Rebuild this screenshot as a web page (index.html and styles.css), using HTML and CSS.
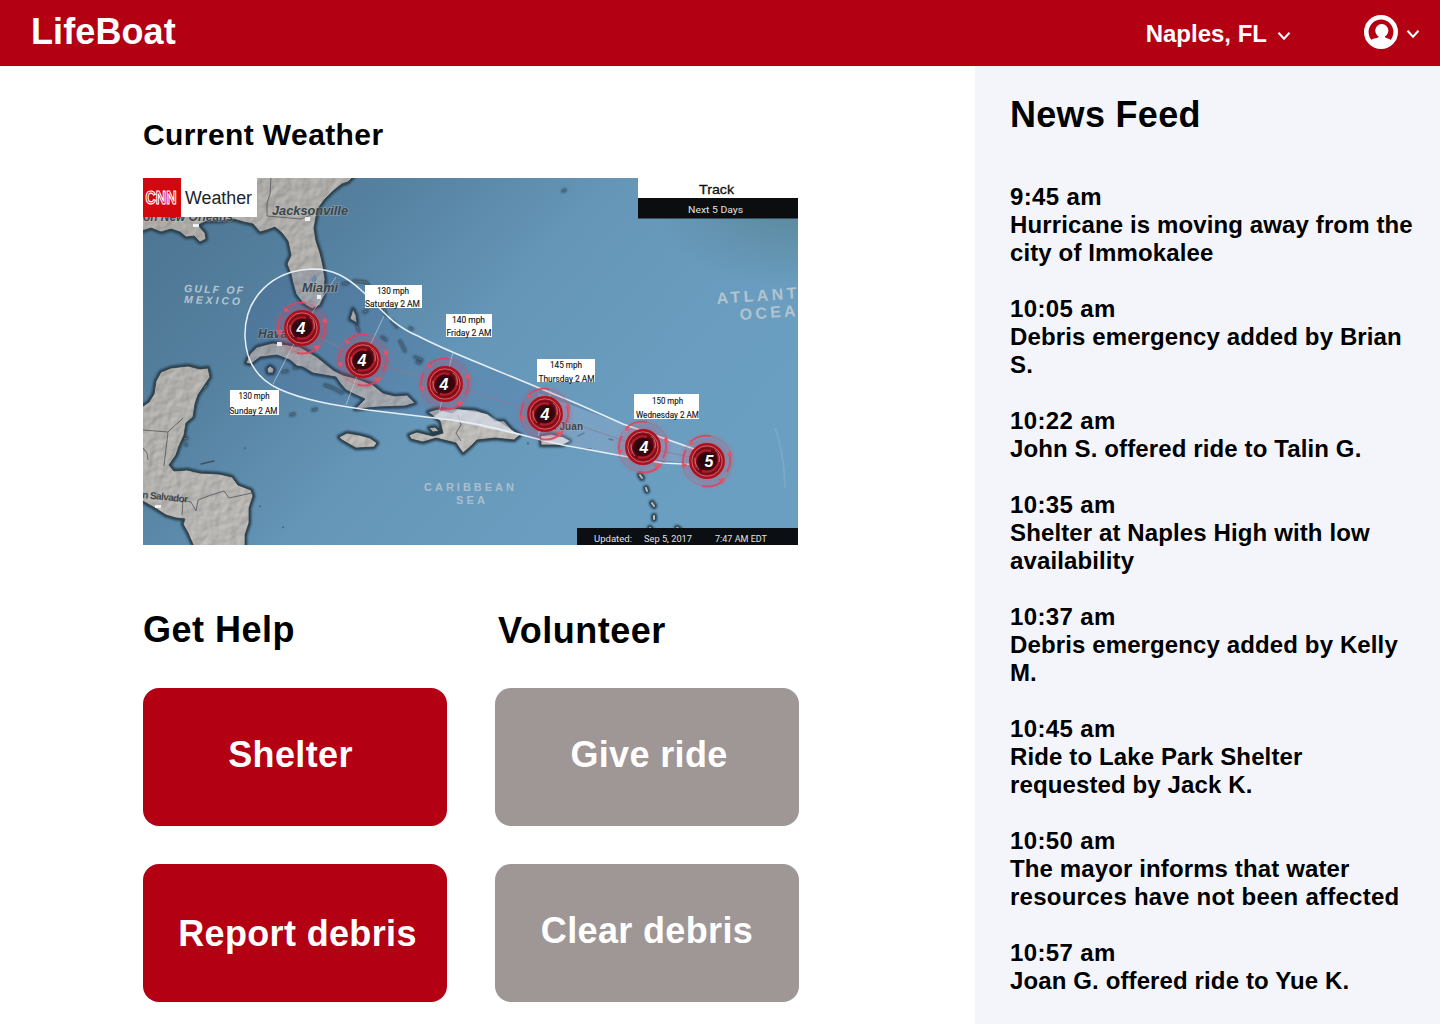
FILE: index.html
```html
<!DOCTYPE html>
<html lang="en">
<head>
<meta charset="utf-8">
<title>LifeBoat</title>
<link rel="stylesheet" href="styles.css">
</head>
<body>
<header class="topbar">
  <h1 class="brand">LifeBoat</h1>
  <div class="location">
    <span>Naples, FL</span>
    <svg class="chevron" width="14" height="10" viewBox="0 0 14 10"><path d="M1.5 1.8 7 7.6 12.5 1.8"/></svg>
  </div>
  <div class="account">
    <svg width="34" height="34" viewBox="0 0 34 34"><circle cx="17" cy="17" r="14.7" fill="none" stroke="#fff" stroke-width="4.6"/><circle cx="17.8" cy="15.6" r="6.6" fill="#fff"/><path d="M14.6 19h6.4v3.200c1.500 1.200 4.500 1.200 6 3.300L23 31H11l-4.300-5.500c1.500-2.100 5.900-2.300 7.900-3.300z" fill="#fff"/></svg>
    <svg class="chevron" width="14" height="10" viewBox="0 0 14 10"><path d="M1.5 1.8 7 7.6 12.5 1.8"/></svg>
  </div>
</header>
<div class="layout">
  <main class="main">
    <h2 class="weather-title">Current Weather</h2>
    <svg class="map" width="655" height="367" viewBox="0 0 655 367">
      <defs>
        <linearGradient id="sea" x1="0" y1="0" x2="1" y2="0.5"><stop offset="0" stop-color="#4b7490"/><stop offset="0.28" stop-color="#547f9e"/><stop offset="0.6" stop-color="#6697b9"/><stop offset="1" stop-color="#6b9fc1"/></linearGradient>
        <radialGradient id="dusk" cx="1" cy="0.08" r="0.22"><stop offset="0" stop-color="#55808f" stop-opacity=".7"/><stop offset="1" stop-color="#55808f" stop-opacity="0"/></radialGradient>
        <radialGradient id="core"><stop offset="0" stop-color="#16060a"/><stop offset="0.55" stop-color="#3c060e"/><stop offset="0.85" stop-color="#8a0f1b"/><stop offset="1" stop-color="#b6192a"/></radialGradient>
        <radialGradient id="glow"><stop offset="0.5" stop-color="#d8405a" stop-opacity=".35"/><stop offset="1" stop-color="#d8405a" stop-opacity="0"/></radialGradient>
        <linearGradient id="terrain" x1="0" y1="0" x2="1" y2="1"><stop offset="0" stop-color="#aaa9a5"/><stop offset="1" stop-color="#c2c1bd"/></linearGradient>
        <filter id="relief" x="-5%" y="-5%" width="110%" height="110%" color-interpolation-filters="sRGB"><feTurbulence type="fractalNoise" baseFrequency="0.11" numOctaves="2" seed="4" result="n"/><feDiffuseLighting in="n" surfaceScale="0.8" lighting-color="#fff" result="l"><feDistantLight azimuth="225" elevation="62"/></feDiffuseLighting><feComposite in="l" in2="SourceGraphic" operator="arithmetic" k1="1.12" k2="0" k3="0" k4="0" result="m"/><feComposite in="m" in2="SourceGraphic" operator="in"/></filter>
        <filter id="soft"><feGaussianBlur stdDeviation="1"/></filter>
        <clipPath id="frame"><rect width="655" height="367"/></clipPath>
        <path id="coast" d="M-4-4H213L205 4 199 6 190 13 182 21 176 29 173 39 171 50 173 63 177 75 180 88 182 101 181 117 177 127 169 131 160 125 153 116 150 105 148 96 144 86 148 77 145 63 139 55 132 49 124 52 117 54 110 46 101 44 90 41 77 43 64 43 55 47 62 55 63 61 57 64 51 58 43 59 37 54 28 51 18 54 8 50-4 54zM-4 231 6 224 11 216 13 203 18 194 28 190 45 188 57 191 65 190 67 199 61 208 55 217 52 226 50 239 43 245 41 257 36 268 33 277 26 287 31 293 44 292 57 295 76 296 89 299 95 307 108 312 110 318 106 330 106 345 102 357V371H52L45 355 40 346 42 341 33 340 23 337 12 330-4 321zM103 185 107 176 114 169 130 165 145 167 157 169 174 179 190 192 200 197 215 201 230 207 240 215 252 218 264 217 272 225 262 228 235 229 212 231 222 221 213 217 203 212 197 205 193 199 170 195 160 189 154 188 147 182 134 177 117 179 108 186zM285 234 295 231 309 235 315 231 332 232 344 236 352 243 361 243 369 252 377 257 371 262 352 260 334 262 327 269 320 275 313 265 293 260 280 264 268 261 266 257 274 254 290 258 300 255 297 243zM196 259 204 255 216 257 227 260 234 265 231 269 213 270 199 262zM398 258 408 256 420 259 427 263 419 267 398 267zM286 250 292 249 296 253 290 254zM124 191 127 188 131 191 130 195 125 195zM207 141 210 131 213 137 214 145z"/>
        <path id="islets" d="M200 106 205 105M211 103 223 104 226 108M214 148 216 153M221 134 224 133M241 131 243 137M249 143 254 149M267 150 269 151M239 159 243 162M257 163 262 173M272 179 279 182M277 185 274 184M182 207 190 210 199 215M140 194 144 193M151 190 154 190M61 210 64 207M41 261 44 260M43 266 43 267M148 237 151 236M170 232 173 231M420 13 422 12"/>
        <path id="antilles" d="M497 297 499 300M503 310 504 313M509 325 511 328M511 338 511 341M507 350 508 351M534 350 536 351"/>
        <path id="specks" d="M58 286 71 283M117 328 117 328.500M102 270 102 270.500M140 349 140 349.500M385 265 385 266M435 258 441 255M440 271 448 271M466 261 470 262"/>
        <g id="storm"><circle r="30" fill="url(#glow)"/><g fill="none" stroke="#e04259"><circle r="25" stroke-opacity=".4" stroke-width=".9"/><path d="M-17-19A25 25 0 0 1 4-25" stroke-width="1.500"/><path d="M-23 7A24 24 0 0 1-21-11M22-8A24 24 0 0 1 20 11M17 19A25 25 0 0 1-5 25" stroke-width="1.800" stroke-opacity=".85"/></g><path d="M-18-21l1 5-1 0 6-1zM-25 2l5 1-3 5zM20-6l3-5 3 6zM11 18l8-1-4 6z" fill="#e65266"/><circle r="16.300" fill="url(#core)" stroke="#b00f1c" stroke-width="3.200"/><circle r="15.200" fill="none" stroke="#dcb0ae" stroke-opacity=".7" stroke-width=".8"/><path d="M-11 7C-15-3-7-13 4-10M11-7C15 4 6 13-5 10" fill="none" stroke="#b01c2a" stroke-width="2.400"/><path d="M8-11C12-8 13-4 12 1M-12-3C-12 2-11 5-8 9" fill="none" stroke="#dd8d90" stroke-opacity=".7" stroke-width="1"/></g>
      </defs>
      <g clip-path="url(#frame)">
        <rect width="655" height="367" fill="url(#sea)"/>
        <rect width="655" height="367" fill="url(#dusk)"/>
        <path d="M632 250C638 265 641 285 642 310" fill="none" stroke="#a5c5da" stroke-opacity=".25" stroke-width="2"/>
        <g filter="url(#soft)" fill="none" stroke="#263d4c" stroke-linejoin="round" stroke-linecap="round"><use href="#coast" stroke-width="4.5"/><use href="#islets" stroke-width="3.5" stroke-opacity=".8"/><use href="#antilles" stroke-width="6"/></g>
        <use href="#coast" fill="url(#terrain)" filter="url(#relief)"/>
        <use href="#coast" fill="none" stroke="#39444a" stroke-width=".8"/>
        <use href="#islets" fill="none" stroke="#65767e" stroke-width="1"/>
        <use href="#antilles" fill="none" stroke="#b9c0c0" stroke-width="2" stroke-linecap="round"/>
        <use href="#specks" fill="none" stroke="#3a5463" stroke-width="1.300" stroke-linecap="round"/>
        <path d="M128 0 127 16 124 25V38L158 41 170 36M0 252 25 254 29 250 36 244 40 240M25 254 21 288M39 337 40 322 48 324 53 333 55 322 68 317 81 313 86 320 109 315M315 237 318 247 313 255 318 263M0 270 4 275 5 282" fill="none" stroke="#50565a" stroke-width=".8"/>
        <path d="M168 101 172 96 174 101 171 106z" fill="#7199b7"/>
        <path d="M170 91C190 91 204 99 219 113 235 127 248 147 275 158 302 172 324 180 350 191L435 226 480 246 560 274 562 287 520 285 480 278 420 267C380 258 340 245 300 241L225 232C190 227 160 222 136 211 114 201 103 183 102 159 101 119 130 92 170 91z" fill="#31508a" fill-opacity=".16"/>
        <path d="M300 232 315 231 344 236 369 252 376 257 320 245 290 239zM398 258 420 259 427 263 419 267 398 263z" fill="#e8edf6" fill-opacity=".6"/>
        <path d="M395 215 480 246 560 274 562 287 480 278 395 261z" fill="#c4d6ee" fill-opacity=".25"/>
        <path d="M560 274 480 246 435 226 350 191C324 180 302 172 275 158 248 147 235 127 219 113 204 99 190 91 170 91 130 92 101 119 102 159 103 183 114 201 136 211 160 222 190 227 225 232L300 241C340 245 380 258 420 267L480 278 520 285 562 287" fill="none" stroke="#e6f0f6" stroke-width="1.5"/>
        <path d="M193 99 159 150 130 206M241 138 220 182 203 227M310 174 302 206 296 236M408 213 402 236 395 258" fill="none" stroke="#c9d3dc" stroke-opacity=".65" stroke-width="1"/>
        <path d="M159 150 220 182 302 206 402 236 500 269 565 283" fill="none" stroke="#98758e" stroke-opacity=".7" stroke-width="1"/>
        <path d="M162 39h5v4h-5zM174 117h4v4h-4zM134 164h5v4h-5zM50 46h6v3h-6zM12 327h6v3h-6z" fill="#eef2f4"/>
        <g class="place"><text x="129" y="37" textLength="76" lengthAdjust="spacingAndGlyphs">Jacksonville</text><text x="159" y="114" textLength="36" lengthAdjust="spacingAndGlyphs">Miami</text><text x="115" y="160" textLength="44">Havana</text><text x="-4" y="43" textLength="94">ton New Orleans</text><text x="395" y="252" textLength="45" class="juan">San Juan</text></g>
        <text class="salvador" x="-1" y="320" textLength="46" transform="rotate(6 0 320)">n Salvador</text>
        <g class="ocean"><text x="41" y="114" textLength="59" transform="rotate(2 41 114)">GULF OF</text><text x="41" y="125" textLength="56" transform="rotate(2 41 125)">MEXICO</text></g>
        <g class="ocean wide"><text x="281" y="313" textLength="90">CARIBBEAN</text><text x="313" y="326" textLength="29">SEA</text></g>
        <g class="ocean atlantic"><text x="574" y="126" textLength="80" transform="rotate(-4 574 126)">ATLANT</text><text x="597" y="142" textLength="56" transform="rotate(-4 597 142)">OCEA</text></g>
        <use href="#storm" x="159" y="150"/><use href="#storm" x="220" y="182"/><use href="#storm" x="302" y="206"/><use href="#storm" x="402" y="236"/><use href="#storm" x="500" y="269"/><use href="#storm" x="564" y="283"/>
        <g class="category"><text x="158" y="156">4</text><text x="219" y="188">4</text><text x="301" y="212">4</text><text x="402" y="242">4</text><text x="501" y="275">4</text><text x="566" y="289">5</text></g>
        <path d="M222 107h57v23h-57zM303 136h46v23h-46zM394 181h58v23h-58zM491 216h65v25h-65zM87 212h49v25H87z" fill="#fff"/>
        <g class="stop"><text x="234" y="115.500" textLength="32" lengthAdjust="spacingAndGlyphs">130 mph</text><text x="222" y="129" textLength="55" lengthAdjust="spacingAndGlyphs">Saturday 2 AM</text><text x="309" y="144.500" textLength="33" lengthAdjust="spacingAndGlyphs">140 mph</text><text x="303.500" y="158" textLength="45" lengthAdjust="spacingAndGlyphs">Friday 2 AM</text><text x="407" y="190" textLength="32" lengthAdjust="spacingAndGlyphs">145 mph</text><text x="395.500" y="203.500" textLength="56" lengthAdjust="spacingAndGlyphs">Thursday 2 AM</text><text x="509" y="225.500" textLength="31" lengthAdjust="spacingAndGlyphs">150 mph</text><text x="493" y="239.500" textLength="63" lengthAdjust="spacingAndGlyphs">Wednesday 2 AM</text><text x="95.500" y="221" textLength="31" lengthAdjust="spacingAndGlyphs">130 mph</text><text x="86.500" y="235.500" textLength="48" lengthAdjust="spacingAndGlyphs">Sunday 2 AM</text></g>
        <rect width="38" height="39" fill="#d3070e"/><rect x="38" width="76" height="39" fill="#fff"/>
        <text class="cnn" x="2.5" y="26" textLength="31" lengthAdjust="spacingAndGlyphs">CNN</text>
        <text class="channel" x="42" y="26" textLength="67" lengthAdjust="spacingAndGlyphs">Weather</text>
        <rect x="495" width="160" height="20" fill="#fff"/><rect x="495" y="20" width="160" height="20.5" fill="#0c0d0e"/><rect x="434" y="350" width="221" height="17" fill="#0b0e12"/>
        <text class="track" x="556" y="16" textLength="35" lengthAdjust="spacingAndGlyphs">Track</text>
        <g class="caption"><text x="545" y="34.5" textLength="55" lengthAdjust="spacingAndGlyphs">Next 5 Days</text><text x="451" y="363.500" textLength="38" lengthAdjust="spacingAndGlyphs">Updated:</text><text x="501" y="363.500" textLength="48" lengthAdjust="spacingAndGlyphs">Sep 5, 2017</text><text x="572" y="363.500" textLength="52" lengthAdjust="spacingAndGlyphs">7:47 AM EDT</text></g>
      </g>
    </svg>
    <div class="actions">
      <section class="column">
        <h2>Get Help</h2>
        <button class="action">Shelter</button>
        <button class="action report">Report debris</button>
      </section>
      <section class="column volunteer">
        <h2>Volunteer</h2>
        <button class="action">Give ride</button>
        <button class="action">Clear debris</button>
      </section>
    </div>
  </main>
  <aside class="feed">
    <h2>News Feed</h2>
    <ul class="items">
      <li><time>9:45 am</time>Hurricane is moving away from the<br>city of Immokalee</li>
      <li><time>10:05 am</time>Debris emergency added by Brian<br>S.</li>
      <li><time>10:22 am</time>John S. offered ride to Talin G.</li>
      <li><time>10:35 am</time>Shelter at Naples High with low<br>availability</li>
      <li><time>10:37 am</time>Debris emergency added by Kelly<br>M.</li>
      <li><time>10:45 am</time>Ride to Lake Park Shelter<br>requested by Jack K.</li>
      <li><time>10:50 am</time>The mayor informs that water<br><span class="loose">resources have not been affected</span></li>
      <li><time>10:57 am</time>Joan G. offered ride to Yue K.</li>
    </ul>
  </aside>
</div>
</body>
</html>
```
FILE: styles.css
```css
* { box-sizing: border-box; }
body { margin: 0; height: 1024px; overflow: hidden; background: #fff; color: #000; font-family: "Arial Rounded MT Bold", "Liberation Sans", Arial, sans-serif; font-weight: 700; }
h1, h2 { margin: 0; font-size: 36px; line-height: 42px; font-weight: 700; white-space: nowrap; }
.topbar { display: flex; height: 66px; padding: 0 20px 0 31px; background: #b30012; color: #fff; }
.brand { padding-top: 11px; letter-spacing: .1px; }
.location { display: flex; align-items: flex-start; gap: 10px; margin-left: auto; padding-top: 20px; font-size: 24px; line-height: 28px; }
.location .chevron { margin-top: 11px; }
.account { display: flex; gap: 8px; width: 56px; margin-left: 73px; padding-top: 15px; }
.account .chevron { margin-top: 14px; }
.chevron { flex: none; fill: none; stroke: #fff; stroke-width: 2.1; }
.layout { display: grid; grid-template-columns: 975px 465px; height: 958px; }
.main { padding: 51px 0 0 143px; }
.weather-title { font-size: 30px; line-height: 35px; letter-spacing: .4px; }
.map { display: block; margin-top: 26px; }
.actions { display: flex; gap: 48px; margin-top: 64px; }
.column { display: flex; flex-direction: column; width: 304px; }
.column h2 { margin-bottom: 37px; letter-spacing: .5px; }
.volunteer h2 { padding: 1px 0 0 3px; margin-bottom: 36px; }
.action { display: block; height: 138px; margin: 0 0 38px; padding: 0 9px 4px 0; border: 0; border-radius: 16px; background: #b30012; color: #fff; font: inherit; font-size: 36px; letter-spacing: .35px; }
.volunteer .action { padding-right: 0; padding-left: 4px; background: #9f9696; }
.action.report { padding: 2px 0 0 5px; }
.volunteer .action:last-child { padding-right: 4px; }
.feed { padding: 28px 0 0 35px; background: #f4f5fa; }
.feed h2 { letter-spacing: .3px; }
.items { display: flex; flex-direction: column; gap: 28px; margin: 47px 0 0; padding: 0; list-style: none; font-size: 24px; line-height: 28px; letter-spacing: .12px; white-space: nowrap; }
.items time { display: block; letter-spacing: .36px; }
.items .loose { letter-spacing: .25px; }
.map text { font-family: "Liberation Sans", Arial, sans-serif; font-weight: 400; }
.map .place text { font-size: 12px; font-weight: 700; font-style: italic; fill: #3b444a; stroke: #c1c2be; stroke-width: 1.5px; stroke-opacity: .4; paint-order: stroke; }
.map .place .juan { font-size: 10px; font-style: normal; }
.map .salvador { font-size: 10px; font-weight: 700; fill: #41474a; }
.map .ocean text { font-size: 10.5px; font-weight: 700; font-style: italic; fill: #b3c6d2; }
.map .wide text { font-style: normal; font-size: 11px; fill: #aabfcd; }
.map .atlantic text { font-size: 16px; font-style: normal; fill: #b1c4cf; }
.map .category text { font-size: 16px; font-weight: 700; font-style: italic; fill: #fff; text-anchor: middle; }
.map .stop text { font-family: Roboto, "Liberation Sans", sans-serif; font-size: 9.5px; fill: #151515; stroke: #151515; stroke-width: .15px; }
.map .cnn { font-size: 18px; font-weight: 700; fill: #d3070e; stroke: #fff; stroke-width: 1.2px; stroke-linejoin: round; }
.map .channel { font-size: 18px; fill: #20242a; }
.map .track { font-size: 13px; fill: #111; stroke: #111; stroke-width: .3px; }
.map .caption text { font-family: Roboto, "Liberation Sans", sans-serif; font-size: 9.5px; fill: #e1e3e4; }
```
